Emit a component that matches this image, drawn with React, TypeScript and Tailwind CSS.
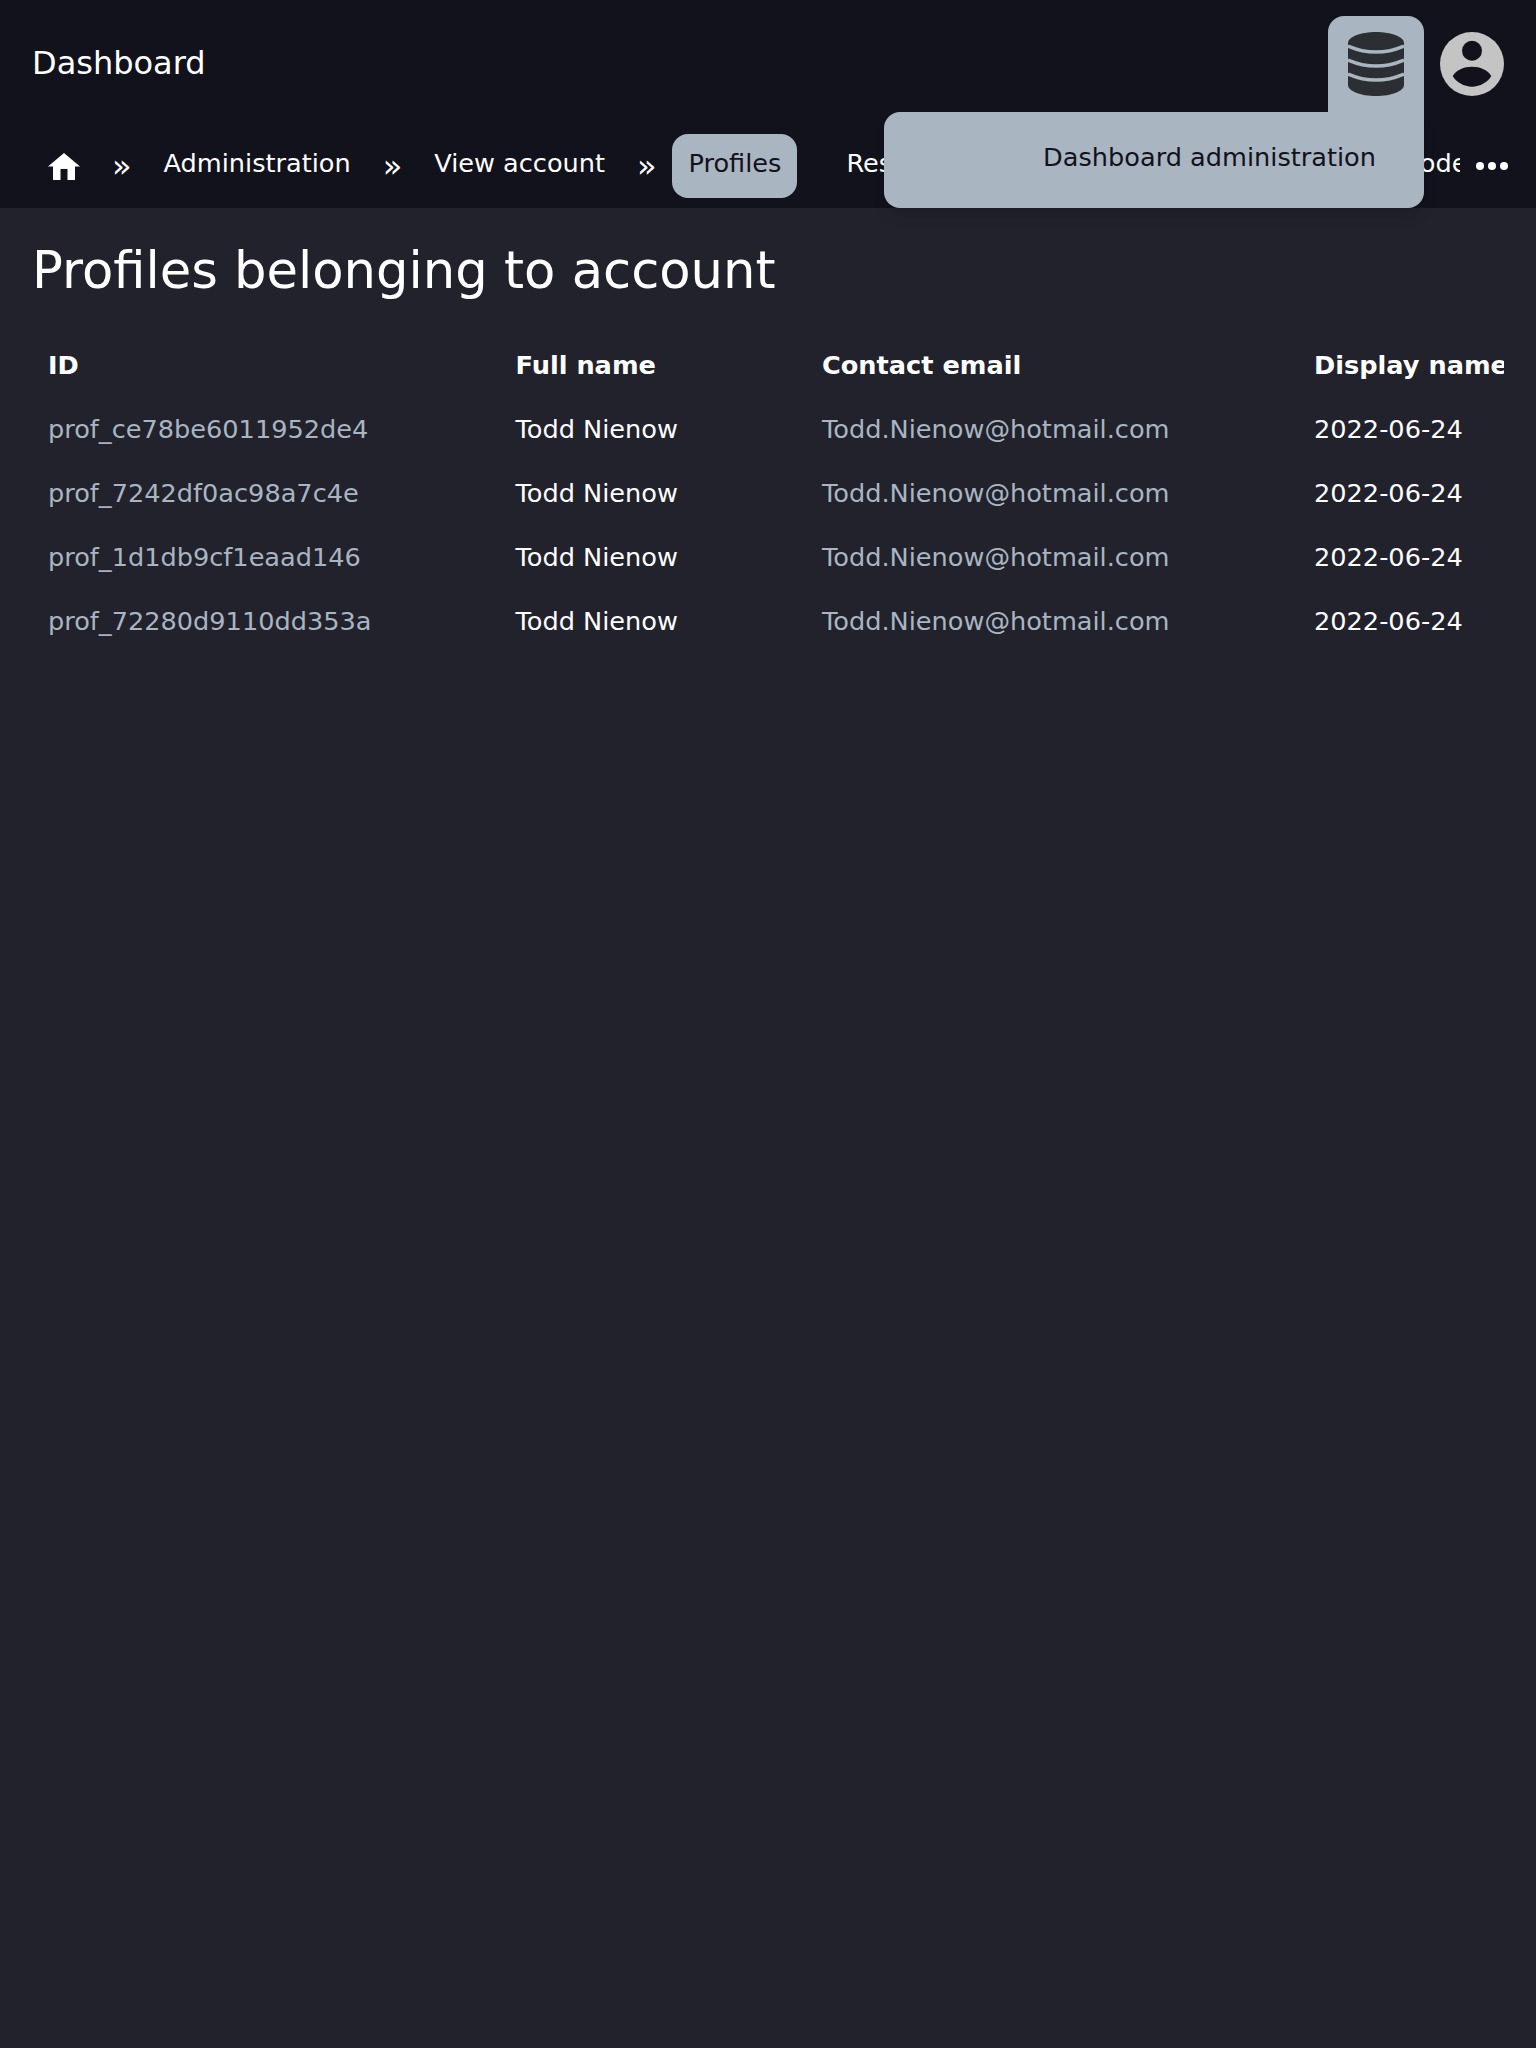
const PROFILE_IDS = [
  "prof_ce78be6011952de4",
  "prof_7242df0ac98a7c4e",
  "prof_1d1db9cf1eaad146",
  "prof_72280d9110dd353a",
];

function HomeIcon() {
  return (
    <svg viewBox="0 0 32 27" className="h-[27px] w-8 fill-white">
      <path d="M16 0 32 13.5H27V27H19.5V16H12.5V27H5V13.5H0Z" />
    </svg>
  );
}

function DatabaseIcon() {
  return (
    <svg viewBox="0 0 56 64" className="h-16 w-14">
      <path d="M0 11C0 5 12.5 0 28 0S56 5 56 11V53C56 59 43.5 64 28 64S0 59 0 53Z" fill="#2b2f33" />
      <g fill="none" stroke="#a9b5c1" strokeWidth="3.5">
        <path d="M0 14Q28 26 56 14" />
        <path d="M0 28Q28 40 56 28" />
        <path d="M0 42Q28 54 56 42" />
      </g>
    </svg>
  );
}

function AvatarIcon() {
  return (
    <svg viewBox="0 0 64 64" className="h-16 w-16">
      <circle cx="32" cy="32" r="32" fill="#c4c4c4" />
      <circle cx="32" cy="18.7" r="10" fill="#11121b" />
      <path d="M12.7 44C16 38 24 34.7 32 34.7S48 38 51.3 44C48 50 40 54.7 32 54.7S16 50 12.7 44Z" fill="#11121b" />
    </svg>
  );
}

function DotsIcon() {
  return (
    <svg viewBox="0 0 32 8" className="ml-auto h-2 w-8 shrink-0 fill-white">
      <circle cx="4" cy="4" r="4" />
      <circle cx="16" cy="4" r="4" />
      <circle cx="28" cy="4" r="4" />
    </svg>
  );
}

function Separator() {
  return <span className="shrink-0 px-[15.95px] text-[32px] leading-[40px] text-white">»</span>;
}

export default function App() {
  return (
    <div className="min-h-[2048px] bg-[#21222c] font-['DejaVu_Sans',sans-serif] text-[25.6px] leading-[32px] text-white">
      {/* Header */}
      <header className="relative h-[208px] bg-[#11121b]">
        <div className="flex h-[112px] items-start justify-between px-8 pt-4">
          <span className="pt-[23px] text-[32px] leading-[48px]">Dashboard</span>
          <div className="flex gap-4">
            <button type="button" className="flex h-24 w-24 justify-center rounded-t-2xl bg-[#a9b5c1] pt-4">
              <DatabaseIcon />
            </button>
            <div className="pt-4">
              <AvatarIcon />
            </div>
          </div>
        </div>

        {/* Breadcrumb row */}
        <div className="mt-[22px] flex h-16 items-center pl-8 pr-7">
          <div className="flex w-[1428px] items-center overflow-hidden whitespace-nowrap">
            <span className="flex w-16 shrink-0 justify-center"><HomeIcon /></span>
            <Separator />
            <span className="shrink-0 px-4 pb-1.5">Administration</span>
            <Separator />
            <span className="shrink-0 px-4 pb-1.5">View account</span>
            <Separator />
            <span className="flex h-16 shrink-0 items-center rounded-2xl bg-[#a9b5c1] px-4 pb-1.5 text-[#11121b]">Profiles</span>
            <span className="ml-[33px] w-[470px] shrink-0 px-4 pb-1.5">Resources</span>
            <span className="w-[172px] shrink-0 px-4 pb-1.5">Promo codes</span>
          </div>
          <DotsIcon />
        </div>

        {/* Open menu */}
        <div className="absolute right-[112px] top-[112px] flex h-24 w-[540px] justify-end rounded-b-2xl rounded-tl-2xl bg-[#a9b5c1] pr-12 pt-[29px] text-[#11121b] shadow-lg">
          Dashboard administration
        </div>
      </header>

      {/* Content */}
      <main className="px-8">
        <h1 className="pt-[30px] text-[51.2px] leading-[64px]">Profiles belonging to account</h1>
        <div className="mt-8 overflow-hidden">
          <table className="w-[1600px] table-fixed border-collapse text-left">
            <colgroup>
              <col className="w-[467.5px]" />
              <col className="w-[306.5px]" />
              <col className="w-[492px]" />
              <col />
            </colgroup>
            <thead>
              <tr className="h-16 font-bold">
                <th className="px-4 pb-0.5">ID</th>
                <th className="px-4 pb-0.5">Full name</th>
                <th className="px-4 pb-0.5">Contact email</th>
                <th className="px-4 pb-0.5">Display name</th>
              </tr>
            </thead>
            <tbody>
              {PROFILE_IDS.map((id) => (
                <tr key={id} className="h-16">
                  <td className="px-4 pb-0.5 text-[#a9b5c1]">{id}</td>
                  <td className="px-4 pb-0.5">Todd Nienow</td>
                  <td className="px-4 pb-0.5 text-[#a9b5c1]">Todd.Nienow@hotmail.com</td>
                  <td className="px-4 pb-0.5">2022-06-24</td>
                </tr>
              ))}
            </tbody>
          </table>
        </div>
      </main>
    </div>
  );
}
